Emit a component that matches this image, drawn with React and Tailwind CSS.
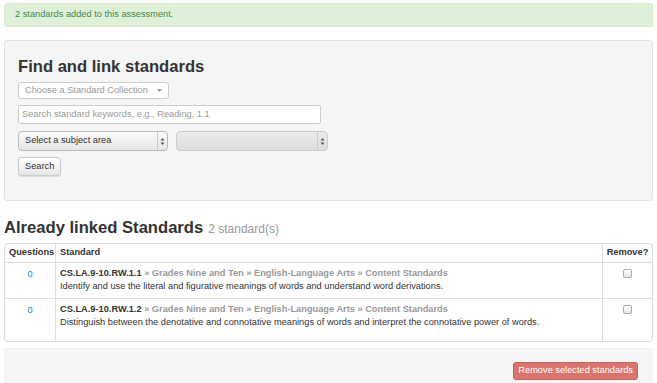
import React from "react";

const rows = [
  {
    code: "CS.LA.9-10.RW.1.1",
    text: "Identify and use the literal and figurative meanings of words and understand word derivations.",
    h: "h-[36px]",
  },
  {
    code: "CS.LA.9-10.RW.1.2",
    text: "Distinguish between the denotative and connotative meanings of words and interpret the connotative power of words.",
    h: "h-[43px]",
  },
];

const UpDown = () => (
  <svg width="5" height="9" viewBox="0 0 5 9" className="text-[#555]">
    <path d="M0.5 3.5 L2.5 1 L4.5 3.5 Z M0.5 5.5 L2.5 8 L4.5 5.5 Z" fill="currentColor" />
  </svg>
);

export default function App() {
  return (
    <div className="w-[657px] h-[383px] overflow-hidden bg-white font-['Liberation_Sans',Arial,sans-serif] text-[9.25px] text-[#333]">
      <div className="mx-[4px] mt-[3px] h-[24px] flex items-center px-[10px] bg-[#dff0d8] border border-[#d6e9c6] rounded-[3px] text-[#468847]">
        2 standards added to this assessment.
      </div>

      <div className="mx-[4px] mt-[13px] h-[161px] bg-[#f5f5f5] border border-[#e3e3e3] rounded-[3px] px-[13px] pt-[16px]">
        <h3 className="text-[16.6px] font-bold text-[#333] leading-[20px]">Find and link standards</h3>
        <div className="mt-[5px] w-[151px] h-[17px] flex items-center justify-between pl-[6px] pr-[6px] bg-white border border-[#ccc] rounded-[3px] text-[#999]">
          <span>Choose a Standard Collection</span>
          <svg width="5" height="3" viewBox="0 0 5 3">
            <path d="M0 0 L5 0 L2.5 3 Z" fill="#999" />
          </svg>
        </div>
        <div className="mt-[6px] w-[303px] h-[19px] flex items-center px-[3px] bg-white border border-[#ccc] rounded-[2px] text-[#999]">
          Search standard keywords, e.g., Reading, 1.1
        </div>
        <div className="mt-[7px] flex gap-[8px]">
          <div className="w-[150px] h-[20px] flex items-stretch bg-gradient-to-b from-[#fafafa] to-[#e6e6e6] border border-[#bbb] rounded-[4px]">
            <span className="flex-1 flex items-center pl-[6px] text-[#333]">Select a subject area</span>
            <span className="w-[10px] border-l border-[#ccc] flex items-center justify-center">
              <UpDown />
            </span>
          </div>
          <div className="w-[152px] h-[20px] flex items-stretch bg-gradient-to-b from-[#ececec] to-[#dcdcdc] border border-[#ccc] rounded-[4px]">
            <span className="flex-1" />
            <span className="w-[10px] border-l border-[#ccc] flex items-center justify-center">
              <UpDown />
            </span>
          </div>
        </div>
        <button className="mt-[6px] h-[19px] px-[6px] bg-gradient-to-b from-white to-[#e6e6e6] border border-[#ccc] rounded-[3px] shadow-[0_1px_1px_rgba(0,0,0,0.1)] text-[#333]">
          Search
        </button>
      </div>

      <div className="mx-[4px] mt-[17px] flex items-baseline gap-[5px]">
        <h3 className="text-[16.6px] font-bold leading-[20px]">Already linked Standards</h3>
        <span className="text-[12px] text-[#999]">2 standard(s)</span>
      </div>

      <div className="mx-[4px] mt-[5px] border border-[#ddd] rounded-[3px] overflow-hidden">
        <div className="flex h-[18px] items-center font-bold">
          <div className="w-[50px] pl-[4px]">Questions</div>
          <div className="flex-1 pl-[4px] border-l border-[#ddd] h-full flex items-center">Standard</div>
          <div className="w-[50px] text-center border-l border-[#ddd] h-full flex items-center justify-center">Remove?</div>
        </div>
        {rows.map((row) => (
          <div key={row.code} className={`flex ${row.h} border-t border-[#ddd]`}>
            <div className="w-[50px] text-center pt-[5px] text-[#0088cc]">0</div>
            <div className="flex-1 pl-[4px] pt-[4px] border-l border-[#ddd] leading-[13px]">
              <div>
                <span className="font-bold">{row.code}</span>
                <span className="font-bold text-[#999]"> » Grades Nine and Ten » English-Language Arts » Content Standards</span>
              </div>
              <div>{row.text}</div>
            </div>
            <div className="w-[50px] border-l border-[#ddd] flex justify-center pt-[6px]">
              <span className="w-[9px] h-[9px] rounded-[2px] border border-[#aaa] bg-gradient-to-b from-white to-[#e6e6e6]" />
            </div>
          </div>
        ))}
      </div>

      <div className="mx-[4px] mt-[6px] h-[40px] bg-[#f5f5f5] border-t border-[#eee] flex items-start justify-end pt-[13px] pr-[15px]">
        <button className="h-[18px] px-[4px] bg-[#d9746e] border border-[#c9625c] rounded-[3px] text-white">
          Remove selected standards
        </button>
      </div>
    </div>
  );
}
